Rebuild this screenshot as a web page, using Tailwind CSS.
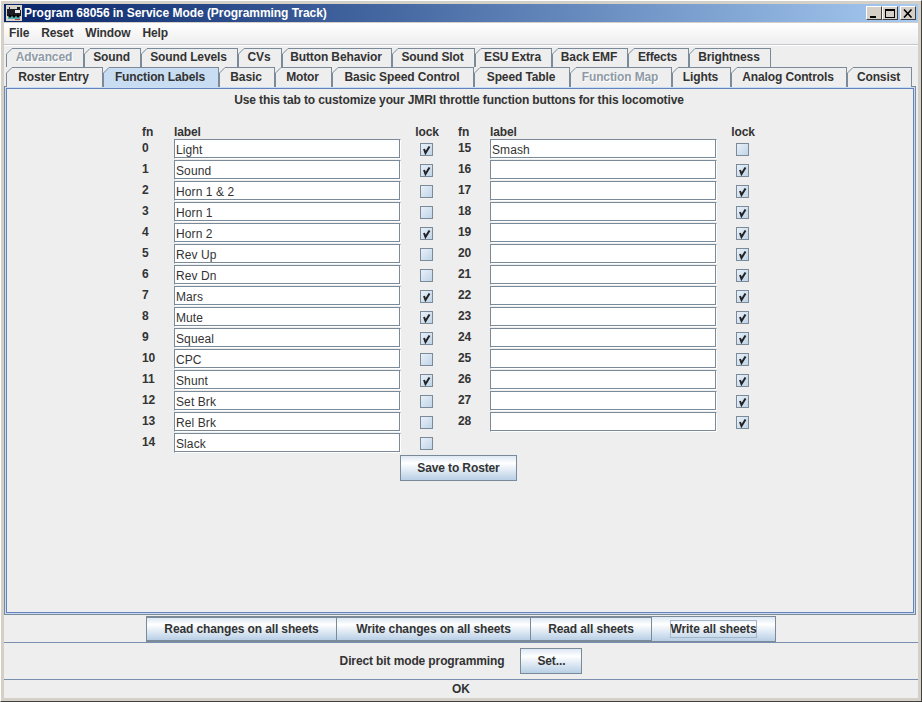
<!DOCTYPE html>
<html lang="en">
<head>
  <meta charset="UTF-8">
  <title>Program 68056 in Service Mode (Programming Track)</title>
  <script src="https://cdn.jsdelivr.net/npm/@tailwindcss/browser@4"></script>
</head>
<body class="bg-[#d4d0c8] font-['Liberation_Sans',Arial,sans-serif] text-[12px] font-bold tracking-[-0.12px] text-[#333333] overflow-hidden">

<div class="w-[922px] h-[702px] border-b border-r border-[#404040] p-[3px] pt-[4px] pl-[4px] pr-[3px] flex flex-col border-t border-t-white border-l border-l-white">

  <!-- Title bar -->
  <div class="h-[18px] shrink-0 flex items-center bg-linear-to-r from-[#0a246a] to-[#a6caf0] pl-[2px] pr-[2px] text-white -mt-[1px] -ml-[1px] mr-0">
    <svg width="16" height="16" viewBox="0 0 16 16" class="shrink-0">
      <rect width="16" height="16" fill="#d8d4cc"/>
      <path d="M1 4h2V2h1v2h7V2h3v3h1v6H1z" fill="#1c1c24"/>
      <rect x="9" y="5" width="5" height="3" fill="#e8e8e8"/>
      <rect x="2" y="11" width="12" height="3" fill="#58b4b4"/>
      <circle cx="4" cy="11" r="1.5" fill="#000"/><circle cx="8" cy="11" r="1.5" fill="#000"/><circle cx="12" cy="11" r="1.5" fill="#000"/>
      <rect x="9" y="14" width="5" height="1" fill="#c04040"/>
    </svg>
    <span class="ml-[2px] text-[12px] tracking-[-0.04px]">Program 68056 in Service Mode (Programming Track)</span>
    <div class="ml-auto flex items-center">
      <div class="w-[16px] h-[14px] bg-[#d4d0c8] border border-t-white border-l-white border-r-[#404040] border-b-[#404040] flex items-end justify-center pb-[1px] text-black"><div class="w-[6px] h-[2px] bg-black -ml-[2px]"></div></div>
      <div class="w-[16px] h-[14px] bg-[#d4d0c8] border border-t-white border-l-white border-r-[#404040] border-b-[#404040] flex items-center justify-center"><div class="w-[10px] h-[9px] border border-black border-t-2"></div></div>
      <div class="w-[16px] h-[14px] ml-[2px] bg-[#d4d0c8] border border-t-white border-l-white border-r-[#404040] border-b-[#404040] flex items-center justify-center">
        <svg width="10" height="9" viewBox="0 0 10 9"><path d="M1 0.5l7.5 8M8.5 0.5L1 8.5" stroke="#000" stroke-width="1.6" fill="none"/></svg>
      </div>
    </div>
  </div>

  <!-- Menu -->
  <div class="mt-[1px] -ml-[1px] h-[21px] shrink-0 flex items-center gap-[12px] pl-[5px] pb-[1px] bg-linear-to-b from-white to-[#eeeeee] text-[#333333]">
    <span>File</span><span>Reset</span><span>Window</span><span>Help</span>
  </div>
  <div class="-ml-[1px] h-[2px] shrink-0 border-t border-[#c4c8cc] border-b border-b-white"></div>

  <!-- Tabs and pane -->
  <div class="-ml-[1px] flex-1 min-h-0 flex flex-col bg-[#eeeeee] pt-[2px]">
    <div id="row1" class="flex h-[19px] shrink-0 pl-[2px]"></div>
    <div id="row2" class="flex h-[19px] shrink-0 pl-[2px]"></div>

    <div class="h-[529px] w-[912px] shrink-0 border border-[#7a8a99] bg-[#c8ddf2] p-[1px]">
      <div class="h-full border border-[#6382bf] bg-[#eeeeee] relative flex flex-col">
        <div class="text-center h-[36px] pt-[4px] pr-[2px] leading-[14px]">Use this tab to customize your JMRI throttle function buttons for this locomotive</div>
        <div id="grid" class="ml-[135px] grid grid-cols-[32px_227px_57px_32px_227px_57px] grid-rows-[15px] auto-rows-[21px] w-fit"></div>
        <div class="flex justify-center pr-[3px]">
          <button class="w-[117px] h-[26px] border border-[#7a8a99] bg-linear-to-b from-[#dde8f3] via-white via-30% to-[#b8cfe5] font-bold">Save to Roster</button>
        </div>
      </div>
    </div>

    <!-- Read / write buttons -->
    <div class="mt-[1px] h-[26px] flex justify-center shrink-0">
      <button class="w-[190px] border border-t-2 border-b-2 border-r-0 border-[#7a8a99] bg-linear-to-b from-[#dde8f3] via-white via-30% to-[#b8cfe5] font-bold">Read changes on all sheets</button>
      <button class="w-[194px] border border-t-2 border-b-2 border-r-0 border-[#7a8a99] bg-linear-to-b from-[#dde8f3] via-white via-30% to-[#b8cfe5] font-bold">Write changes on all sheets</button>
      <button class="w-[121px] border border-t-2 border-b-2 border-r-0 border-[#7a8a99] bg-linear-to-b from-[#dde8f3] via-white via-30% to-[#b8cfe5] font-bold">Read all sheets</button>
      <button class="w-[125px] border border-[#7a8a99] bg-linear-to-b from-[#dde8f3] via-white via-30% to-[#b8cfe5] font-bold flex items-center justify-center"><span class="border border-[#a3b8cc] h-[18px] leading-[16px]">Write all sheets</span></button>
    </div>
    <div class="h-[37px] shrink-0 border-t border-[#7a8fb0] flex items-center justify-center gap-[16px]">
      <span>Direct bit mode programming</span>
      <button class="w-[62px] h-[26px] border border-[#7a8a99] bg-linear-to-b from-[#dde8f3] via-white via-30% to-[#b8cfe5] font-bold">Set...</button>
    </div>
    <div class="flex-1 border-t border-[#7a8fb0] text-center leading-[16px] pt-[1px]">OK</div>
  </div>
</div>

<script>
  const TAB_ROW1 = [['Advanced',78,1],['Sound',57],['Sound Levels',97],['CVs',44],['Button Behavior',110],['Sound Slot',83],['ESU Extra',77],['Back EMF',76],['Effects',61],['Brightness',82]];
  const TAB_ROW2 = [['Roster Entry',97],['Function Labels',116,0,1],['Basic',56],['Motor',57],['Basic Speed Control',142],['Speed Table',96],['Function Map',102,1],['Lights',59],['Analog Controls',116],['Consist',65]];

  // Metal tab with the cut top-left corner
  function tabHtml([name, width, disabled, selected], lower) {
    const bg = selected ? 'bg-[#c8ddf2]' : 'bg-[#eeeeee]';
    const text = disabled ? 'text-[#8e9aa6] [text-shadow:1px_1px_0_#ffffff]' : 'text-[#333333]';
    const corner = selected ? '#c8ddf2' : '#eeeeee';
    const leading = lower ? 'leading-[19px]' : 'leading-[17px]';
    return `<div class="relative h-[20px] border-t border-r border-l border-[#7a8a99] pr-[2px] ${bg} ${text} text-center ${leading}" style="width:${width}px">
      <svg width="7" height="7" viewBox="0 0 7 7" class="absolute -left-[1px] -top-[1px]"><rect width="7" height="7" fill="#eeeeee"/><path d="M0 7V6L6 0H7V7Z" fill="${corner}"/><path d="M0.5 7V6L6 0.5H7" fill="none" stroke="#7a8a99"/></svg>
      <span class="relative">${name}</span></div>`;
  }
  document.getElementById('row1').innerHTML = TAB_ROW1.map(t => tabHtml(t, false)).join('');
  document.getElementById('row2').innerHTML = TAB_ROW2.map(t => tabHtml(t, true)).join('');

  const labels = ['Light','Sound','Horn 1 &amp; 2','Horn 1','Horn 2','Rev Up','Rev Dn','Mars','Mute','Squeal','CPC','Shunt','Set Brk','Rel Brk','Slack','Smash'];
  const lockedLeft = [0,1,4,7,8,9,11];

  function cell(n) {
    if (n > 28) return '<div></div><div></div><div></div>';
    const checked = n < 15 ? lockedLeft.includes(n) : n > 15;
    const mark = checked ? '<svg width="11" height="11" viewBox="0 0 11 11"><path d="M3 5L4.5 9L8.5 2.5" fill="none" stroke="#222" stroke-width="2"/></svg>' : '';
    return `<div class="leading-[16px]">${n}</div>
      <div class="h-[20px] -mt-[1px] border border-[#7a8a99] border-r-white border-b-white bg-white pl-[1px] leading-[21px] font-normal text-[12px] text-[#333333] tracking-[0.1px] shadow-[inset_-1px_-1px_0_#7a8a99]">${labels[n] || ''}</div>
      <div class="flex justify-center pt-[3px] pr-[7px]"><div class="w-[13px] h-[13px] border border-[#7a8a99] bg-linear-to-br from-[#e8f0f8] to-[#c0d4e8] flex items-center justify-center">${mark}</div></div>`;
  }

  const head = '<div class="leading-[14px]">fn</div><div class="leading-[14px]">label</div><div class="leading-[14px] text-center pr-[5px]">lock</div>';
  let html = head + head;
  for (let i = 0; i < 15; i++) {
    html += cell(i) + cell(i + 15);
  }
  document.getElementById('grid').innerHTML = html;
</script>
</body>
</html>
